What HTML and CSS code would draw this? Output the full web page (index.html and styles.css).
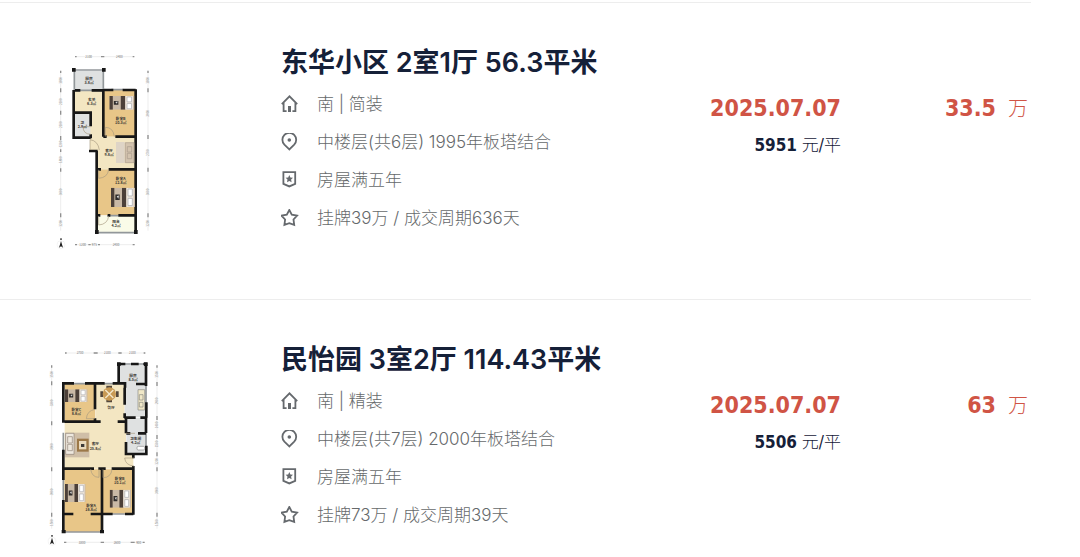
FILE: index.html
```html
<!DOCTYPE html>
<html lang="zh-CN">
<head>
    <meta charset="UTF-8">
    <meta name="viewport" content="width=device-width, initial-scale=1.0">
    <title>成交房源</title>
    <link rel="stylesheet" href="styles.css">
</head>
<body>
    <!-- shared icons and furniture -->
    <svg class="sprite" aria-hidden="true">
        <symbol id="icon-house" viewBox="0 0 18 18">
            <path d="M.8 9.2 8.5 1.4l7.7 7.8M2.6 7.6v8.6h3M14.4 7.6v8.6h-3" />
            <path d="M8.5 11v6" stroke-width="3" />
        </symbol>
        <symbol id="icon-pin" viewBox="0 0 18 18">
            <path d="M8.3 16.4 3.4 11.7a6.9 6.9 0 1 1 9.8 0z" />
            <circle cx="8.3" cy="7" r="1.8" class="solid" />
        </symbol>
        <symbol id="icon-badge" viewBox="0 0 18 18">
            <path d="M2.4 1.2h11.8v11.6l-5.9 2.6-5.9-2.6z" />
            <path class="solid" d="m8.3 4.1 1.1 2.4 2.6.3-1.9 1.8.5 2.6-2.3-1.3L6 11.2l.5-2.6-1.9-1.8 2.6-.3z" />
        </symbol>
        <symbol id="icon-star" viewBox="0 0 18 18">
            <path d="m8.3 1 2.5 4.6 5.3 1-3.6 3.9.7 5.3-4.9-1.7-4.9 1.7.7-5.3L.5 6.600l5.300-1z" />
        </symbol>
        <symbol id="bed" viewBox="0 0 72 56" preserveAspectRatio="none">
            <path fill="#c9b9a6" d="M0 0h72v56H0z" />
            <path fill="#4c4039" d="M0 0h10v56H0zM33 0h13v56H33z" />
            <path fill="#eee6dc" d="M46 0h22v56H46z" />
            <path fill="#fff" stroke="#a4a4a8" stroke-width="2" d="M51 4h13v20H51zM51 31h13v21H51z" />
            <path fill="#302d2c" d="M13 20h13v16H13z" />
            <path fill="#ddd" d="m17 25 7-2-2 9z" />
        </symbol>
        <symbol id="compass" viewBox="0 0 28 32">
            <circle cx="14" cy="20" r="12" fill="none" stroke="#ddd" />
            <path fill="#222" d="m14 9 6 20-6-4-6 4zM12 1h4v5h-4z" />
        </symbol>
    </svg>

    <ul class="house-list">
        <li class="house">
            <svg class="plan" viewBox="-120 33 627 600" role="img" aria-label="东华小区户型图">
                <path class="dim" d="M105 50h178M62 92v480M324 92v480M105 614h178" />
                <path class="tick" d="M105 50h5M183 50h10M278 50h5M62 92v7M62 145v12M62 212v12M62 288v12M62 328v8M62 385v10M62 520v12M324 92v7M324 145v12M324 285v12M324 383v12M324 520v12M105 614h6M145 614h7M174 614h6M278 614h6" />
                <path class="wood" d="M192 150h94v140h-94zM174 388h112v138H174z" />
                <path class="tile" d="M103 92h87v58h-87zM105 220h46v70h-46z" />
                <path class="hall" d="M105 152h85v138h96v98H174v-56h-24V218h-45z" />
                <path class="tile" d="M105 220h46v70h-46z" />
                <path class="balcony" d="M174 528h112v48H174z" />
                <path class="window" d="M103 90h87v60M103 90v60M106 151h80M214 149h36M168 578h118M202 527h34" />
                <path class="wall" d="M101 150v143h51M105 151h16M155 151h37M190 148v142M192 150h28M248 150h39M287 148v432M105 218h47v41M152 283v12M190 290h10M226 290h58M147 333h26M170 333v246M174 388h9M206 388h80M174 526h7M203 526h8M235 526h48" />
                <path class="post" d="M96 84h11v11H96zM186 84h11v11h-11zM165 570h11v12h-11zM282 570h11v12h-11z" />
                <path class="door" d="M196 290v-28q24 0 27 28M150 330v-31q24 3 28 31M176 389v26q27-2 30-26M176 528v27q27-2 30-27M152 260h-23q0 22 23 23" />
                <use href="#bed" x="208" y="168" width="75" height="41" />
                <use href="#bed" x="213" y="443" width="72" height="58" />
                <path fill="#ded4c6" d="M228 306h26v63h-26z" />
                <path fill="#d3c3ae" stroke="#a99b8c" stroke-width="2" d="M256 308h26v60h-26zM262 320h13v16h-13zM262 340h13v16h-13z" />
                <g class="room">
                    <text x="147" y="119">厨房</text><text x="147" y="131">3.8㎡</text>
                    <text x="155" y="183">玄关</text><text x="155" y="195">6.3㎡</text>
                    <text x="242" y="241">卧室B</text><text x="242" y="253">10.3㎡</text>
                    <text x="127" y="252">卫</text><text x="127" y="264">2.9㎡</text>
                    <text x="207" y="335">客厅</text><text x="207" y="347">9.8㎡</text>
                    <text x="242" y="419">卧室A</text><text x="242" y="431">12.8㎡</text>
                    <text x="228" y="549">阳台</text><text x="228" y="561">4.2㎡</text>
                </g>
                <g class="size">
                    <text x="146" y="53">2100</text><text x="238" y="53">2400</text>
                    <text x="128" y="617">1200</text><text x="163" y="617">975</text><text x="228" y="617">2400</text>
                    <text transform="translate(66 121) rotate(-90)">1800</text>
                    <text transform="translate(66 185) rotate(-90)">2100</text>
                    <text transform="translate(66 254) rotate(-90)">2100</text>
                    <text transform="translate(66 312) rotate(-90)">1200</text>
                    <text transform="translate(66 359) rotate(-90)">1800</text>
                    <text transform="translate(66 456) rotate(-90)">3600</text>
                    <text transform="translate(66 550) rotate(-90)">1200</text>
                    <text transform="translate(328 121) rotate(-90)">1800</text>
                    <text transform="translate(328 220) rotate(-90)">3900</text>
                    <text transform="translate(328 338) rotate(-90)">2700</text>
                    <text transform="translate(328 456) rotate(-90)">3600</text>
                    <text transform="translate(328 550) rotate(-90)">1200</text>
                </g>
                <use href="#compass" x="49" y="592" width="28" height="36" />
            </svg>
            <div class="info">
                <h2>东华小区 2室1厅 56.3平米</h2>
                <ul class="details">
                    <li><svg class="icon" aria-hidden="true"><use href="#icon-house" /></svg>南 | 简装</li>
                    <li><svg class="icon" aria-hidden="true"><use href="#icon-pin" /></svg>中楼层(共6层) 1995年板塔结合</li>
                    <li><svg class="icon" aria-hidden="true"><use href="#icon-badge" /></svg>房屋满五年</li>
                    <li><svg class="icon" aria-hidden="true"><use href="#icon-star" /></svg>挂牌39万 / 成交周期636天</li>
                </ul>
            </div>
            <div class="deal">
                <p class="date">2025.07.07</p>
                <p class="unit"><strong>5951</strong> 元/平</p>
            </div>
            <p class="total"><strong>33.5</strong><span>万</span></p>
        </li>

        <li class="house">
            <svg class="plan" viewBox="-105 24 627 600" role="img" aria-label="民怡园户型图">
                <path class="dim" d="M90 39h241M50 76v490M366 76v490M87 607h242" />
                <path class="tick" d="M90 39h5M176 39h12M250 39h10M326 39h5M50 76v7M50 124v12M50 244v12M50 382v12M50 518v12M366 76v7M366 126v12M366 228v12M366 285v12M366 337v12M366 382v12M366 518v12M87 607h7M197 607h10M287 607h12M323 607h6" />
                <path class="wood" d="M89 132h92v113H89zM88 388h113v188H88zM204 388h88v133h-88z" />
                <path class="hall" d="M182 132h87v113h4v97h22v44H89V245h93z" />
                <path class="tile" d="M254 74h77v158h-62v-98h-15zM274 234h57v107h-57z" />
                <path class="window" d="M252 72h80M333 75v265M112 131h42M206 131h30M85 278v60M85 420v60M86 576h114M232 522h38" />
                <path class="wall" d="M251 132V72h20M288 72h23M325 72h8v66M334 187v46M85 248V130h32M150 130h59M233 130h37v13M180 130v78M180 235v10M269 143v51M269 220v14M303 132h28M89 245h108M248 245h24M268 233h34M316 233h17v46M273 235v45M273 306v36h61v-25M274 280h12M309 280h24M85 329v91M85 480v97M85 386h92M190 386h22M230 386h66M295 342v13M295 378v146M201 386v30M201 410v167M86 522h29M167 522h66M270 522h25" />
                <path class="post" d="M246 67h11v11h-11zM327 67h11v11h-11zM80 570h12v10H80zM195 570h12v10h-12z" />
                <path class="door" d="M180 236h-26q2-24 26-28M192 387v25q-22 0-25-25M204 388v25q24 0 27-25M297 354h-28q2 22 28 24M273 280h27" />
                <use href="#bed" x="90" y="148" width="68" height="38" />
                <use href="#bed" x="90" y="432" width="62" height="54" />
                <use href="#bed" x="224" y="449" width="64" height="54" />
                <!-- dining table -->
                <path fill="#54483d" d="M214 137h17v8h-17zM214 179h17v8h-17zM196 154h8v17h-8zM243 154h8v17h-8z" />
                <circle cx="223" cy="162" r="20" fill="#c89a55" />
                <path stroke="#f4e9cd" stroke-width="4" d="m211 150 24 24M235 150l-24 24" />
                <!-- sofa and rug -->
                <path fill="#cfbea7" d="M90 278h73v74H90z" />
                <path fill="#eee8de" stroke="#8e8277" stroke-width="2" d="M92 280h25v63H92zM98 290h14v19H98zM98 313h14v19H98z" />
                <path fill="#9c7848" d="M126 296h35v39h-35z" />
                <path fill="#eadabd" d="M132 303h22v25h-22z" />
                <path fill="#3c3a38" d="M138 312h10v9h-10z" />
                <!-- kitchen counter and bath -->
                <path fill="#f0e8c8" stroke="#898a82" stroke-width="2" d="M309 149h20v61h-20zM313 164h11v16h-11zM313 187h11v14h-11z" />
                <rect x="306" y="319" width="23" height="11" rx="4" fill="#fff" stroke="#888" stroke-width="2" />
                <g class="room">
                    <text x="294" y="112">厨房</text><text x="294" y="124">8.5㎡</text>
                    <text x="228" y="206">餐厅</text>
                    <text x="124" y="212">卧室C</text><text x="124" y="224">8.6㎡</text>
                    <text x="302" y="300">卫生间</text><text x="302" y="312">4.2㎡</text>
                    <text x="181" y="316">客厅</text><text x="181" y="329">25.8㎡</text>
                    <text x="168" y="500">卧室A</text><text x="168" y="512">16.8㎡</text>
                    <text x="254" y="419">卧室B</text><text x="254" y="431">10.1㎡</text>
                </g>
                <g class="size">
                    <text x="135" y="43">2700</text><text x="217" y="43">2100</text><text x="292" y="43">2100</text>
                    <text x="141" y="611">3300</text><text x="246" y="611">2600</text><text x="311" y="611">900</text>
                    <text transform="translate(54 103) rotate(-90)">1500</text>
                    <text transform="translate(54 189) rotate(-90)">3300</text>
                    <text transform="translate(54 320) rotate(-90)">3900</text>
                    <text transform="translate(54 456) rotate(-90)">3900</text>
                    <text transform="translate(54 548) rotate(-90)">1500</text>
                    <text transform="translate(370 103) rotate(-90)">1500</text>
                    <text transform="translate(370 183) rotate(-90)">2900</text>
                    <text transform="translate(370 255) rotate(-90)">1400</text>
                    <text transform="translate(370 312) rotate(-90)">1500</text>
                    <text transform="translate(370 364) rotate(-90)">1200</text>
                    <text transform="translate(370 452) rotate(-90)">3900</text>
                    <text transform="translate(370 548) rotate(-90)">1500</text>
                </g>
                <use href="#compass" x="37" y="582" width="28" height="36" />
            </svg>
            <div class="info">
                <h2>民怡园 3室2厅 114.43平米</h2>
                <ul class="details">
                    <li><svg class="icon" aria-hidden="true"><use href="#icon-house" /></svg>南 | 精装</li>
                    <li><svg class="icon" aria-hidden="true"><use href="#icon-pin" /></svg>中楼层(共7层) 2000年板塔结合</li>
                    <li><svg class="icon" aria-hidden="true"><use href="#icon-badge" /></svg>房屋满五年</li>
                    <li><svg class="icon" aria-hidden="true"><use href="#icon-star" /></svg>挂牌73万 / 成交周期39天</li>
                </ul>
            </div>
            <div class="deal">
                <p class="date">2025.07.07</p>
                <p class="unit"><strong>5506</strong> 元/平</p>
            </div>
            <p class="total"><strong>63</strong><span>万</span></p>
        </li>
    </ul>
</body>
</html>
```
FILE: styles.css
```css
body {
    margin: 0;
    background: #fff;
    color: #152038;
    font-family: Inter, "Noto Sans CJK SC", sans-serif;
}
h2, p, ul {
    margin: 0;
    padding: 0;
}
ul {
    list-style: none;
}
.sprite {
    position: absolute;
    width: 0;
    height: 0;
}
.house-list {
    padding: 2px 49px 0 0;
}
.house {
    display: flex;
    align-items: flex-start;
    padding: 48px 0;
    border-top: 1px solid #ededed;
}
.house:last-child {
    padding-bottom: 8px;
}
.plan {
    flex: none;
    width: 209px;
    height: 200px;
    margin-right: 72px;
}
.info {
    flex: 1;
}
.info h2 {
    font-size: 27px;
    line-height: 24px;
    font-weight: 600;
}
.details {
    display: flex;
    flex-direction: column;
    gap: 16px;
    margin-top: 18px;
}
.details li {
    display: flex;
    align-items: center;
    gap: 18px;
    color: #66696b;
    font-size: 17px;
    line-height: 22px;
    font-weight: 300;
}
.icon {
    width: 18px;
    height: 18px;
    fill: none;
    stroke: #65696d;
    stroke-width: 1.8;
}
.solid {
    fill: #65696d;
    stroke: none;
}
.deal, .total {
    margin-top: 43px;
    font-family: "DejaVu Sans Condensed", "DejaVu Sans", "Noto Sans CJK SC", sans-serif;
    font-stretch: condensed;
    text-align: right;
}
.date, .total {
    color: #d05445;
    font-size: 23px;
    line-height: 28px;
    font-weight: bold;
}
.unit {
    margin-top: 12px;
    font-size: 17px;
    line-height: 22px;
    font-weight: 300;
}
.unit strong {
    font-weight: bold;
}
.total {
    width: 187px;
    padding-right: 3px;
}
.total span {
    margin-left: 12px;
    font-family: "Noto Sans CJK SC", sans-serif;
    font-size: 20px;
    font-weight: 300;
}

/* floor plans */
.wood {
    fill: #e8c688;
}
.hall {
    fill: #f3e6c2;
}
.tile {
    fill: #dfe1e1;
}
.balcony {
    fill: #fafbe8;
}
.post {
    fill: #171717;
}
.wall, .window, .door, .dim, .tick {
    fill: none;
}
.wall {
    stroke: #171717;
    stroke-width: 8;
}
.window {
    stroke: #92979a;
    stroke-width: 5;
}
.door {
    stroke: #a79a80;
    stroke-width: 2;
}
.dim {
    stroke: #e4e4e4;
    stroke-width: 2;
}
.tick {
    stroke: #909090;
    stroke-width: 4;
}
.room, .size {
    font-family: "Noto Sans CJK SC", sans-serif;
    text-anchor: middle;
}
.room {
    fill: #3b3835;
    font-size: 11px;
    font-weight: bold;
}
.size {
    fill: #777;
    font-size: 9px;
}
```
